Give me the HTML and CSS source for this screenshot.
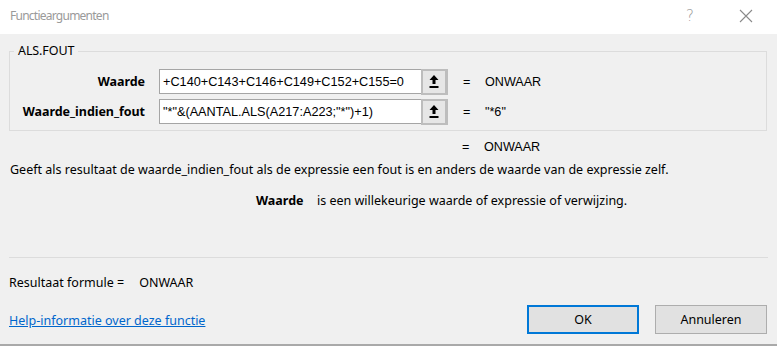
FILE: index.html
```html
<!DOCTYPE html>
<html lang="nl">
<head>
<meta charset="utf-8">
<title>Functieargumenten</title>
<link rel="stylesheet" href="styles.css">
</head>
<body>
<div class="dialog">
  <div class="titlebar">
    <span class="title">Functieargumenten</span>
    <span class="tb-help">?</span>
    <span class="tb-close">
      <svg width="14" height="14" viewBox="0 0 14 14"><path d="M1 1 L13 13 M13 1 L1 13" stroke="#8a8a8a" stroke-width="1.1" fill="none"/></svg>
    </span>
  </div>
  <div class="body">
    <fieldset class="group">
      <legend class="legend">ALS.FOUT</legend>
      <div class="arg-row">
        <span class="arg-label">Waarde</span>
        <div class="arg-input"><span class="arg-text">+C140+C143+C146+C149+C152+C155=0</span></div>
        <button class="ref-btn" type="button">
          <svg width="10" height="13" viewBox="0 0 10 13"><path d="M5 0 L9.5 5 L6.5 5 L6.5 9 L3.5 9 L3.5 5 L0.5 5 Z" fill="#000"/><rect x="0.5" y="11" width="9" height="2" fill="#000"/></svg>
        </button>
        <span class="eq">=</span>
        <span class="val">ONWAAR</span>
      </div>
      <div class="arg-row">
        <span class="arg-label">Waarde_indien_fout</span>
        <div class="arg-input"><span class="arg-text">"*"&amp;(AANTAL.ALS(A217:A223;"*")+1)</span></div>
        <button class="ref-btn" type="button">
          <svg width="10" height="13" viewBox="0 0 10 13"><path d="M5 0 L9.5 5 L6.5 5 L6.5 9 L3.5 9 L3.5 5 L0.5 5 Z" fill="#000"/><rect x="0.5" y="11" width="9" height="2" fill="#000"/></svg>
        </button>
        <span class="eq">=</span>
        <span class="val">"*6"</span>
      </div>
    </fieldset>
    <div class="result-row">
      <span class="eq">=</span>
      <span class="val">ONWAAR</span>
    </div>
    <p class="desc">Geeft als resultaat de waarde_indien_fout als de expressie een fout is en anders de waarde van de expressie zelf.</p>
    <p class="argdesc"><b class="argdesc-name">Waarde</b><span>is een willekeurige waarde of expressie of verwijzing.</span></p>
    <div class="sep"></div>
    <div class="formula">Resultaat formule =<span class="formula-val">ONWAAR</span></div>
    <div class="footer">
      <a class="help" href="#">Help-informatie over deze functie</a>
      <div class="buttons">
        <button class="btn btn-ok" type="button">OK</button>
        <button class="btn" type="button">Annuleren</button>
      </div>
    </div>
  </div>
</div>
</body>
</html>
```
FILE: styles.css
```css
* { box-sizing: border-box; }
html, body { margin: 0; padding: 0; }
body {
  width: 777px;
  height: 346px;
  overflow: hidden;
  background: #f0f0f0;
  font-family: "Noto Sans", "Open Sans", sans-serif;
  font-size: 12.5px;
  color: #000;
}
.dialog {
  width: 777px;
  height: 346px;
  border-bottom: 2px solid #a9a9a9;
  display: flex;
  flex-direction: column;
}
.titlebar {
  height: 34px;
  background: #fff;
  display: flex;
  align-items: center;
  padding-left: 10px;
}
.title {
  flex: 1;
  color: #9a9a9a;
  font-size: 12px;
  letter-spacing: -0.75px;
  padding-bottom: 4px;
}
.tb-help {
  color: #9a9a9a;
  font-size: 15px;
  width: 20px;
  text-align: center;
  margin-right: 39px;
  font-family: "DejaVu Sans", sans-serif;
  font-weight: 300;
  padding-bottom: 2px;
}
.tb-close {
  width: 14px;
  height: 14px;
  margin-right: 24px;
  margin-bottom: 2px;
  display: flex;
}
.body {
  flex: 1;
  padding: 10px 10px 0 9px;
  display: flex;
  flex-direction: column;
}
.group {
  margin: 0;
  width: 758px;
  border: 1px solid #dcdcdc;
  padding: 11px 0 6px 0;
  min-width: 0;
}
.legend {
  margin-left: 4px;
  padding: 0 4px;
  font-size: 12.5px;
  line-height: 14px;
  letter-spacing: -0.1px;
}
.arg-row {
  display: flex;
  align-items: center;
  height: 25px;
  margin-bottom: 5px;
}
.arg-row:last-child { margin-bottom: 0; }
.arg-label {
  width: 135px;
  text-align: right;
  font-weight: bold;
  font-size: 12.5px;
  letter-spacing: -0.05px;
  margin-right: 14px;
}
.arg-input {
  width: 262px;
  height: 25px;
  background: #fff;
  border: 1px solid #a5a5a5;
  border-right: none;
  display: flex;
  align-items: center;
  padding-left: 3px;
  overflow: hidden;
  white-space: nowrap;
}
.arg-text {
  font-family: "Liberation Sans", Arial, sans-serif;
  font-size: 12.7px;
}
.ref-btn {
  width: 27px;
  height: 26px;
  margin: 0;
  padding: 0;
  background: #e6e6e6;
  border: 2px solid #bdbdbd;
  border-right-width: 3px;
  display: flex;
  align-items: center;
  justify-content: center;
}
.eq {
  font-family: "Liberation Sans", Arial, sans-serif;
  font-size: 12.6px;
  margin-left: 15px;
  width: 22px;
}
.val {
  font-family: "Liberation Sans", Arial, sans-serif;
  font-size: 12.6px;
}
.result-row {
  display: flex;
  padding-left: 438px;
  margin-top: 8px;
  height: 16px;
  align-items: center;
}
.desc {
  margin: 7px 0 0 1px;
  line-height: 16px;
}
.argdesc {
  margin: 15px 0 0 247px;
  line-height: 16px;
  display: flex;
}
.argdesc-name {
  width: 61px;
}
.sep {
  margin-top: 48px;
  width: 759px;
  height: 1px;
  background: #dcdcdc;
}
.formula {
  margin-top: 17px;
  line-height: 16px;
}
.formula-val { margin-left: 15px; }
.footer {
  margin-top: 14px;
  display: flex;
  justify-content: space-between;
  align-items: center;
}
.help {
  color: #0066cc;
  text-decoration: underline;
  margin-top: 1px;
}
.buttons {
  display: flex;
  gap: 16px;
  margin-right: 0;
}
.btn {
  width: 112px;
  height: 29px;
  background: #e1e1e1;
  border: 1px solid #adadad;
  font-family: "Noto Sans", sans-serif;
  font-size: 12.5px;
  color: #000;
  padding: 0;
}
.btn-ok {
  border: 2px solid #0078d7;
}
```
